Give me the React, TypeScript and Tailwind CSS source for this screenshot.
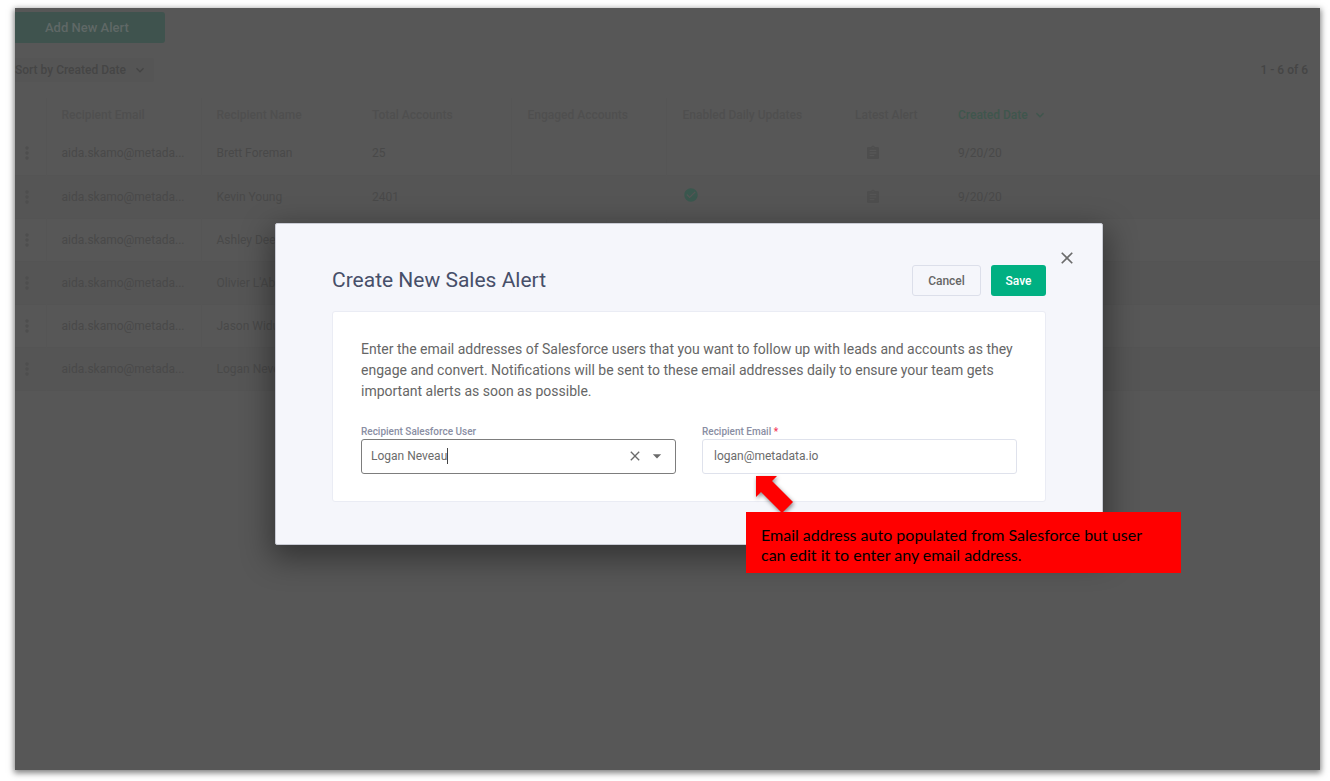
import { useState } from 'react';
import { MdAssignment, MdCheckCircle, MdMoreVert, MdKeyboardArrowDown, MdClose, MdArrowDropDown } from 'react-icons/md';

interface Alert {
  email: string;
  name: string;
  accounts?: number;
  daily?: boolean;
  created?: string;
}

const alerts: Alert[] = [
  { email: 'aida.skamo@metada...', name: 'Brett Foreman', accounts: 25, created: '9/20/20' },
  { email: 'aida.skamo@metada...', name: 'Kevin Young', accounts: 2401, daily: true, created: '9/20/20' },
  { email: 'aida.skamo@metada...', name: 'Ashley Dee' },
  { email: 'aida.skamo@metada...', name: "Olivier L'Abbe" },
  { email: 'aida.skamo@metada...', name: 'Jason Widup' },
  { email: 'aida.skamo@metada...', name: 'Logan Neveau' },
];

function AlertsTable() {
  return (
    <table className="mt-4 w-full table-fixed text-left text-xs text-[#494949]">
      <colgroup>
        <col className="w-[31px]" />
        <col className="w-[155px]" />
        <col className="w-[155px]" />
        <col className="w-[155px]" />
        <col className="w-[155px]" />
        <col className="w-[173px]" />
        <col className="w-[103px]" />
        <col />
      </colgroup>
      <thead>
        <tr className="h-[34px] text-[#4f4f4f]">
          <th className="border-r border-[#555555]"></th>
          <th className="border-r border-[#555555] pl-[15px] font-medium">Recipient Email</th>
          <th className="pl-[15px] font-medium">Recipient Name</th>
          <th className="border-r border-[#555555] pl-4 font-medium">Total Accounts</th>
          <th className="border-r border-[#555555] pl-4 font-medium">Engaged Accounts</th>
          <th className="pl-4 font-medium">Enabled Daily Updates</th>
          <th className="pl-4 font-medium">Latest Alert</th>
          <th className="pl-4 font-medium text-[#3f564d]">
            <span className="flex items-center gap-1">
              Created Date
              <MdKeyboardArrowDown className="size-4" />
            </span>
          </th>
        </tr>
      </thead>
      <tbody>
        {alerts.map((alert) => (
          <tr key={alert.name} className="h-[43px] border-b border-[#545454] even:bg-[#555555]">
            <td className="border-r border-[#555555]">
              <button type="button" aria-label="Row actions" className="flex w-[23px] justify-center text-[#4e4e4e]">
                <MdMoreVert className="size-5" />
              </button>
            </td>
            <td className="border-r border-[#555555] pl-[15px]">{alert.email}</td>
            <td className="pl-[15px]">{alert.name}</td>
            <td className="border-r border-[#555555] pl-4">{alert.accounts}</td>
            <td className="border-r border-[#555555]"></td>
            <td className="pb-1 pl-4">{alert.daily && <MdCheckCircle className="size-4 text-[#3a574e]" />}</td>
            <td className="pl-[26px]">{alert.created && <MdAssignment className="size-4 text-[#4e4e4e]" />}</td>
            <td className="pl-4">{alert.created}</td>
          </tr>
        ))}
      </tbody>
    </table>
  );
}

function Callout() {
  return (
    <div className="absolute top-[252px] left-[470px] w-[435px]">
      <svg className="ml-2 block h-9 w-10 drop-shadow-[1px_2px_2px_rgba(0,0,0,0.45)]" viewBox="0 0 40 36" fill="#ff0000">
        <path d="M2 0H23L18 5L39 26L28 37L7 16L2 21Z" />
      </svg>
      <p className="relative bg-[#ff0000] px-[15px] pt-[13px] pb-2 font-[Lato,sans-serif] text-base leading-5 text-black">
        Email address auto populated from Salesforce but user can edit it to enter any email address.
      </p>
    </div>
  );
}

function CreateAlertModal() {
  const [user, setUser] = useState('Logan Neveau');
  const [email, setEmail] = useState('logan@metadata.io');

  return (
    <div
      role="dialog"
      aria-labelledby="alert-title"
      className="relative h-fit w-full max-w-[828px] rounded-xs border border-[#c9cbd4] bg-[#f5f6fb] px-14 pt-[41px] pb-[42px] shadow-[0_10px_30px_4px_rgba(0,0,0,0.4)]"
    >
      <button type="button" aria-label="Close" className="absolute top-6 right-[25px] text-[#6b6b6b]">
        <MdClose className="size-5" />
      </button>

      <div className="flex items-center justify-between">
        <h2 id="alert-title" className="text-[21px] text-[#474f69]">Create New Sales Alert</h2>
        <div className="flex gap-[10px] text-xs font-medium">
          <button type="button" className="h-[31px] w-[69px] rounded-[3px] border border-[#dcdfea] text-[#666666]">Cancel</button>
          <button type="button" className="h-[31px] w-[55px] rounded-[3px] bg-[#00b082] text-white">Save</button>
        </div>
      </div>

      <form className="mt-[14px] rounded-[3px] border border-[#eaecf4] bg-white px-7 pt-[27px] pb-[27px]">
        <p className="text-sm leading-[21px] text-[#666666]">
          Enter the email addresses of Salesforce users that you want to follow up with leads and accounts as they
          engage and convert. Notifications will be sent to these email addresses daily to ensure your team gets
          important alerts as soon as possible.
        </p>
        <div className="mt-[22px] grid grid-cols-2 gap-[26px]">
          <div>
            <label htmlFor="sf-user" className="block text-[10px] leading-[15px] font-medium text-[#8a8ea3]">
              Recipient Salesforce User
            </label>
            <div className="flex h-[35px] items-center rounded-[3px] border border-[#7d7d7d] pr-2 pl-[9px] text-[#6b6b6b]">
              <input
                id="sf-user"
                role="combobox"
                aria-expanded="false"
                value={user}
                onChange={(e) => setUser(e.target.value)}
                className="field-sizing-content text-xs outline-none"
              />
              <span className="h-4 w-px bg-[#444444]" />
              <button type="button" aria-label="Clear" onClick={() => setUser('')} className="ml-auto">
                <MdClose className="size-4" />
              </button>
              <button type="button" aria-label="Open" className="ml-1">
                <MdArrowDropDown className="size-5" />
              </button>
            </div>
          </div>
          <div>
            <label htmlFor="sf-email" className="block text-[10px] leading-[15px] font-medium text-[#8a8ea3]">
              Recipient Email <span className="text-[#f5385a]">*</span>
            </label>
            <input
              id="sf-email"
              type="email"
              value={email}
              onChange={(e) => setEmail(e.target.value)}
              className="h-[35px] w-full rounded-[3px] border border-[#dfe2ec] px-[11px] text-xs text-[#6b6b6b] outline-none"
            />
          </div>
        </div>
      </form>

      <Callout />
    </div>
  );
}

export default function App() {
  return (
    <div className="flex min-h-screen bg-white pt-2 pr-[10px] pb-[11px] pl-[15px] font-[Roboto,sans-serif]">
      <main className="relative flex-1 bg-[#575757] pt-1 shadow-[0_2px_6px_1px_rgba(0,0,0,0.5)]">
        <button type="button" className="block h-[31px] w-[150px] rounded-r-[3px] bg-[#3f534e] pl-[30px] text-left text-[13px] font-medium text-[#5f6866]">
          Add New Alert
        </button>
        <div className="mt-[15px] flex items-center justify-between text-xs font-medium text-[#454545]">
          <button type="button" className="flex h-6 w-[139px] items-center gap-1.5 rounded-r-[3px] bg-[#555555]">
            Sort by Created Date
            <MdKeyboardArrowDown className="size-4" />
          </button>
          <span className="pr-3">1 - 6 of 6</span>
        </div>
        <AlertsTable />

        <div className="absolute inset-0 flex justify-center pt-[215px] pl-[43px]">
          <CreateAlertModal />
        </div>
      </main>
    </div>
  );
}
